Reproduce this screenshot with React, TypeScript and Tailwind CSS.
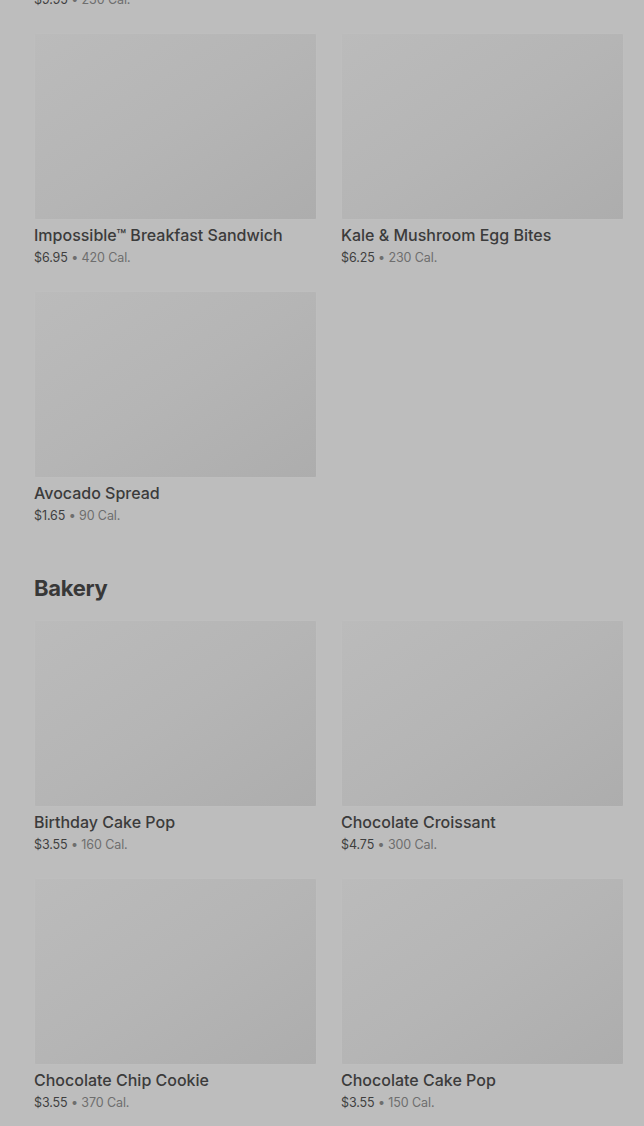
import React from "react";

type Item = { name: string; price: string; cal: string };

const Card = ({ item }: { item: Item }) => (
  <div className="flex flex-col">
    <div className="h-[187px] w-full rounded-[2px] border border-[#bebebe] bg-gradient-to-br from-[#bbbbbb] via-[#b5b5b5] to-[#adadad]" />
    <div className="mt-[5px] text-[16px] leading-[20px] font-medium text-[#3b3b3b]">
      {item.name}
    </div>
    <div className="mt-[4px] text-[12.5px] leading-[17px] text-[#3f3f3f] tracking-[-0.1px]">
      {item.price}
      <span className="text-[#6e6e6e]"> • {item.cal}</span>
    </div>
  </div>
);

const Grid = ({ items }: { items: Item[] }) => (
  <div className="grid grid-cols-2 gap-x-[24px] gap-y-[25px]">
    {items.map((it) => (
      <Card key={it.name} item={it} />
    ))}
  </div>
);

export default function App() {
  const breakfast: Item[] = [
    { name: "Impossible™ Breakfast Sandwich", price: "$6.95", cal: "420 Cal." },
    { name: "Kale & Mushroom Egg Bites", price: "$6.25", cal: "230 Cal." },
    { name: "Avocado Spread", price: "$1.65", cal: "90 Cal." },
  ];
  const bakery: Item[] = [
    { name: "Birthday Cake Pop", price: "$3.55", cal: "160 Cal." },
    { name: "Chocolate Croissant", price: "$4.75", cal: "300 Cal." },
    { name: "Chocolate Chip Cookie", price: "$3.55", cal: "370 Cal." },
    { name: "Chocolate Cake Pop", price: "$3.55", cal: "150 Cal." },
  ];
  return (
    <div
      className="h-[1126px] w-[644px] overflow-hidden bg-[#bdbdbd] pl-[34px] pr-[20px]"
      style={{ fontFamily: "Inter, 'Open Sans', sans-serif" }}
    >
      <div className="-mt-[9px] text-[12.5px] leading-[17px] text-[#3f3f3f] tracking-[-0.1px]">
        $9.95<span className="text-[#6e6e6e]"> • 230 Cal.</span>
      </div>
      <div className="mt-[25px]">
        <Grid items={breakfast} />
      </div>
      <h2 className="mt-[50px] text-[22px] leading-[28px] font-bold text-[#383838] tracking-[-0.3px]">
        Bakery
      </h2>
      <div className="mt-[18px]">
        <Grid items={bakery} />
      </div>
    </div>
  );
}
